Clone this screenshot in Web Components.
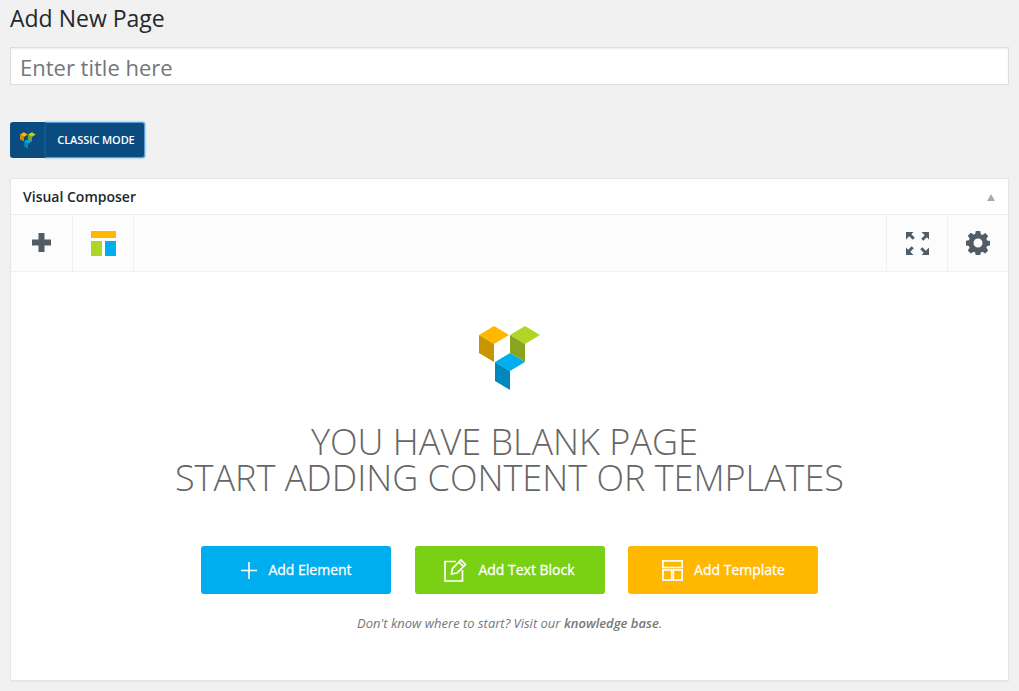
<!DOCTYPE html>
<html>
<head>
<meta charset="utf-8">
<title>Add New Page</title>
<style>
    html, body { margin: 0; background: #f1f1f1; }
    body { padding: 0 10px; font-family: "Open Sans", sans-serif; color: #23282d; height: 691px; overflow: hidden; box-sizing: border-box; }
    page-head { margin-bottom: 37px; }
    classic-button { margin-bottom: 20px; }
</style>
</head>
<body>
<page-head heading="Add New Page" placeholder="Enter title here"></page-head>
<classic-button>CLASSIC MODE</classic-button>
<vc-panel heading="Visual Composer">
    <vc-tool slot="left" icon="plus"></vc-tool>
    <vc-tool slot="left" icon="layout"></vc-tool>
    <vc-tool slot="right" icon="expand"></vc-tool>
    <vc-tool slot="right" icon="gear"></vc-tool>
    <vc-blank></vc-blank>
</vc-panel>

<script>
const LOGO = `
    <polygon fill="#ffb700" points="0,9 15,0 30,9 15,18"/>
    <polygon fill="#c69500" points="0,9 15,18 15,36 0,27"/>
    <polygon fill="#afd626" points="31,9 46,0 61,9 46,18"/>
    <polygon fill="#88a61d" points="31,9 46,18 46,36 31,27"/>
    <polygon fill="#00aef0" points="16,36 31,27 46,36 31,45"/>
    <polygon fill="#0087bb" points="16,36 31,45 31,64 16,55"/>`;

const ICONS = {
    plus: `<svg width="19" height="19" viewBox="0 0 19 19" style="margin:18px 0 0 20px"><path fill="#525c64" d="M6.500 0h6v6.500H19v6h-6.500V19h-6v-6.500H0v-6h6.500z"/></svg>`,
    layout: `<svg width="25" height="25" viewBox="0 0 25 25" style="margin:16px 0 0 18px"><rect width="25" height="7" fill="#ffb700"/><rect y="10" width="11" height="15" fill="#afd626"/><rect x="14" y="10" width="11" height="15" fill="#00aef0"/></svg>`,
    expand: `<svg width="23" height="23" viewBox="0 0 23 23" style="margin:17px 0 0 19px"><g fill="#525c64"><path d="M0 0h7.500L5.300 2.200 8.800 5.700 6.700 7.800 3.200 4.300 0 7.500z"/><path d="M23 0v7.500L20.800 5.300 17.300 8.800 15.200 6.700 18.700 3.200 15.500 0z"/><path d="M0 23v-7.500l2.200 2.200 3.500-3.500 2.100 2.100-3.500 3.500L7.500 23z"/><path d="M23 23h-7.500l2.200-2.200-3.500-3.500 2.100-2.100 3.500 3.500 3.200-3.200z"/></g></svg>`,
    gear: `<svg width="24" height="24" viewBox="0 0 24 24" style="margin:16px 0 0 18px"><path fill="#525c64" fill-rule="evenodd" d="M9.800 0h4.400l.6 3.200 1.700.7 2.700-1.800 3 3-1.800 2.700.7 1.700 3 .6v4.400l-3 .6-.7 1.700 1.800 2.700-3 3-2.700-1.800-1.700.7-.6 3.200H9.800l-.6-3.200-1.700-.7-2.700 1.800-3-3 1.800-2.700-.7-1.700-3-.6V9.800l3-.6.7-1.700-1.800-2.700 3-3 2.700 1.800 1.700-.7zM12 7.500a4.500 4.500 0 1 0 0 9 4.500 4.500 0 0 0 0-9z"/></svg>`
};

const BUTTON_ICONS = {
    plus: `<svg width="16" height="17" viewBox="0 0 16 17"><path fill="#fff" d="M7.200 0h1.600v7.700H16v1.600H8.800V17H7.200V9.300H0V7.700h7.200z"/></svg>`,
    note: `<svg width="23" height="24" viewBox="0 0 23 24" fill="none" stroke="#fff" stroke-width="1.700"><path d="M12 3.500H1V23h17.500V12"/><path d="M7.500 16l1-5.500L17 2l4.500 4.500-8.500 8.500z"/><path d="M15 4l4.500 4.500"/></svg>`,
    template: `<svg width="21" height="21" viewBox="0 0 21 21" fill="none" stroke="#fff" stroke-width="1.700"><rect x=".9" y=".9" width="19.200" height="6.600"/><rect x=".9" y="10" width="8.800" height="10.100"/><rect x="11.300" y="10" width="8.800" height="10.100"/></svg>`
};

class PageHead extends HTMLElement {
    connectedCallback () {
        this.attachShadow ({mode: "open"});
        this.shadowRoot.innerHTML = `
        <style>
            :host { display: block; }
            h1 { margin: 0; height: 47px; font: 400 23px/37px "Open Sans", sans-serif; color: #23282d; }
            input {
                display: block; box-sizing: border-box; width: 100%; height: 38px; margin: 0;
                padding: 4px 9px 2px; border: 1px solid #ddd; background: #fff; outline: 0;
                font: 400 22px "Open Sans", sans-serif; color: #32373c;
                box-shadow: inset 0 1px 2px rgba(0,0,0,.07);
            }
            input::placeholder { color: #72777c; opacity: 1; }
        </style>
        <h1>${this.getAttribute ("heading")}</h1>
        <input type="text" placeholder="${this.getAttribute ("placeholder")}">`;
    }
}

class ClassicButton extends HTMLElement {
    connectedCallback () {
        this.attachShadow ({mode: "open"});
        this.shadowRoot.innerHTML = `
        <style>
            :host { display: flex; width: 135px; height: 36px; }
            .logo { width: 35px; background: #0a4b80; border-radius: 3px 0 0 3px; display: flex; align-items: center; justify-content: center; }
            .label {
                flex: 1; box-sizing: border-box; padding-left: 2px; background: #0a4b80; color: #fff;
                border: 1px solid #5b9dd9; border-left-color: #0d5c99; border-radius: 0 3px 3px 0;
                box-shadow: 0 0 2px rgba(30,140,190,.8);
                font: 600 11px/34px "Open Sans", sans-serif; text-align: center; letter-spacing: -.1px;
            }
        </style>
        <div class="logo"><svg width="16" height="17" viewBox="0 0 62 64">${LOGO}</svg></div>
        <div class="label"><slot></slot></div>`;
    }
}

class VcTool extends HTMLElement {
    connectedCallback () {
        this.attachShadow ({mode: "open"});
        this.shadowRoot.innerHTML = `
        <style>
            :host { display: flex; align-items: flex-start; width: 60px; height: 56px; }
            svg { display: block; }
        </style>
        ${ICONS[this.getAttribute ("icon")]}`;
    }
}

class VcPanel extends HTMLElement {
    connectedCallback () {
        this.attachShadow ({mode: "open"});
        this.shadowRoot.innerHTML = `
        <style>
            :host { display: block; height: 503px; box-sizing: border-box; background: #fff; border: 1px solid #e5e5e5; box-shadow: 0 1px 1px rgba(0,0,0,.04); }
            header { display: flex; align-items: center; justify-content: space-between; height: 35px; padding: 0 12px; border-bottom: 1px solid #eee; }
            h2 { margin: -1px 0 0; font: 600 14px "Open Sans", sans-serif; color: #23282d; }
            .arrow { width: 0; height: 0; border: 4.500px solid transparent; border-top: 0; border-bottom: 7px solid #aaa; margin: 1px 1px 0 0; }
            .bar { display: flex; justify-content: space-between; height: 56px; background: #fcfcfc; border-bottom: 1px solid #f0f0f0; }
            .group { display: flex; }
            .left { padding-left: 1px; }
            .left ::slotted(vc-tool) { border-right: 1px solid #f0f0f0; }
            .right ::slotted(vc-tool) { border-left: 1px solid #f0f0f0; }
        </style>
        <header><h2>${this.getAttribute ("heading")}</h2><span class="arrow"></span></header>
        <div class="bar">
            <div class="group left"><slot name="left"></slot></div>
            <div class="group right"><slot name="right"></slot></div>
        </div>
        <slot></slot>`;
    }
}

class VcButton extends HTMLElement {
    connectedCallback () {
        this.attachShadow ({mode: "open"});
        this.shadowRoot.innerHTML = `
        <style>
            :host {
                display: flex; align-items: center; justify-content: center; gap: 11px; box-sizing: border-box;
                width: 190px; height: 48px; border-radius: 3px;
                background: var(--bg); color: #fff; font: 400 14px "Open Sans", sans-serif;
                -webkit-text-stroke: .3px #fff;
            }
            :host([icon="plus"]), :host([icon="template"]) { padding-left: 2px; }
            svg { display: block; }
            span { margin-top: -2px; }
        </style>
        ${BUTTON_ICONS[this.getAttribute ("icon")]}<span><slot></slot></span>`;
    }
}

class VcBlank extends HTMLElement {
    connectedCallback () {
        this.attachShadow ({mode: "open"});
        this.shadowRoot.innerHTML = `
        <style>
            :host { display: flex; flex-direction: column; align-items: center; padding-top: 54px; }
            .logo { display: block; }
            h3 { margin: 34px 0 0; font: 300 36px/36px "Open Sans", sans-serif; color: #666; text-align: center; }
            h3 div { height: 36px; }
            .shift { padding-right: 10px; }
            .buttons { display: flex; margin: 50px 1px 0 0; }
            vc-button:nth-child(1) { margin-right: 24px; }
            vc-button:nth-child(2) { margin-right: 23px; }
            p { margin: 21px 0 0; font: italic 400 13px/16px "Open Sans", sans-serif; color: #777; }
            b { font-weight: 600; }
        </style>
        <svg class="logo" width="62" height="64" viewBox="0 0 62 64">${LOGO}</svg>
        <h3><div class="shift">YOU HAVE BLANK PAGE</div><div>START ADDING CONTENT OR TEMPLATES</div></h3>
        <div class="buttons">
            <vc-button icon="plus" style="--bg:#00aef0">Add Element</vc-button>
            <vc-button icon="note" style="--bg:#7ad014">Add Text Block</vc-button>
            <vc-button icon="template" style="--bg:#ffb700">Add Template</vc-button>
        </div>
        <p>Don't know where to start? Visit our <b>knowledge base</b>.</p>`;
    }
}

customElements.define ("page-head", PageHead);
customElements.define ("classic-button", ClassicButton);
customElements.define ("vc-tool", VcTool);
customElements.define ("vc-panel", VcPanel);
customElements.define ("vc-button", VcButton);
customElements.define ("vc-blank", VcBlank);
</script>
</body>
</html>
